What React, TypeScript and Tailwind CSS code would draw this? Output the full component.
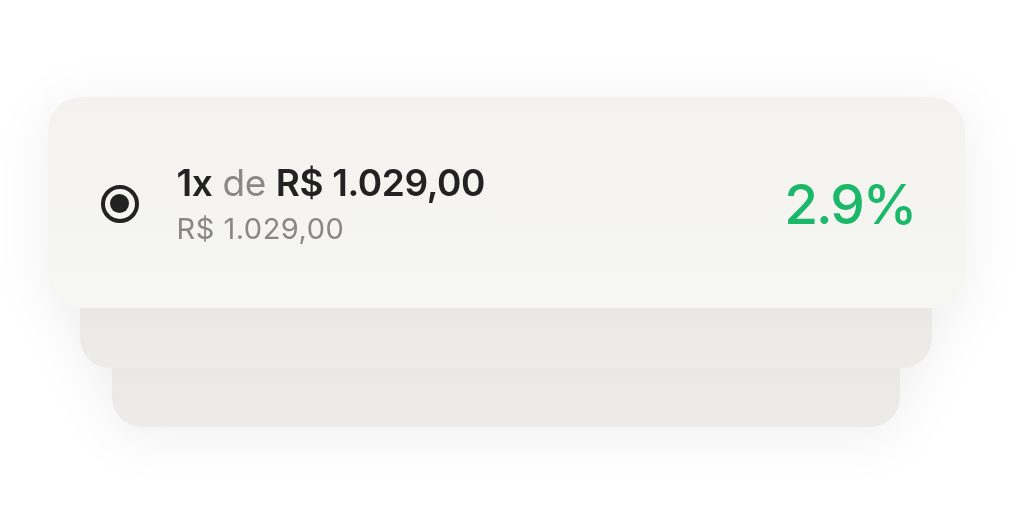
import React from "react";

export default function App() {
  return (
    <div className="w-[1012px] h-[530px] bg-white flex flex-col items-center pt-[97px]" style={{ fontFamily: "Inter, 'Liberation Sans', sans-serif" }}>
      <div className="flex flex-col items-center drop-shadow-[0_8px_26px_rgba(0,0,0,0.065)]">
        <div className="w-[917px] h-[211px] rounded-[34px] bg-gradient-to-b from-[#f3f2ee] to-[#f6f6f2] flex items-center pl-[53px] pr-[49px] relative z-20 box-border">
          <div className="w-[38px] h-[38px] rounded-full border-[4px] border-[#222222] flex items-center justify-center shrink-0 mt-[2px]">
            <div className="w-[19px] h-[19px] rounded-full bg-[#222222]" />
          </div>
          <div className="ml-[38px] flex flex-col mt-[2px]">
            <div className="text-[37px] leading-[44px] tracking-[-0.4px] text-[#222222] whitespace-nowrap">
              <span className="font-semibold">1x</span>
              <span className="text-[#8a8885] font-normal"> de </span>
              <span className="font-semibold">R$ 1.029,00</span>
            </div>
            <div className="text-[29px] leading-[36px] tracking-[0.5px] text-[#8a8885] mt-[6px] whitespace-nowrap">R$ 1.029,00</div>
          </div>
          <div className="ml-auto text-[55px] leading-none text-[#1cb86a] font-medium tracking-[-2px] mt-[4px]">2.9%</div>
        </div>
        <div className="w-[852px] h-[60px] rounded-b-[30px] bg-gradient-to-b from-[#e9e8e4] to-[#edece8] relative z-10" />
        <div className="w-[788px] h-[59px] rounded-b-[30px] bg-gradient-to-b from-[#e9e8e5] to-[#edece9]" />
      </div>
    </div>
  );
}
